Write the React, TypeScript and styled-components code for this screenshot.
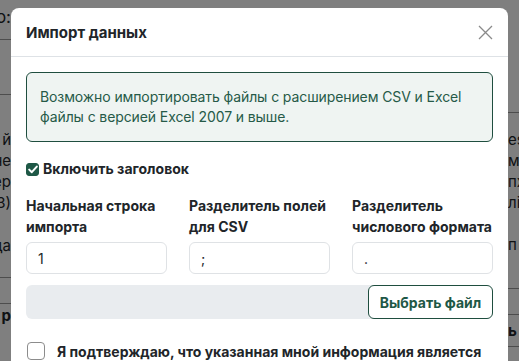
import React from "react";
import styled, { createGlobalStyle } from "styled-components";

const GREEN = "#1e5846";

const Global = createGlobalStyle`
  html, body { margin: 0; padding: 0; height: 100%; overflow: hidden; background: #fff; }
  body { font-family: Inter, "Noto Sans", sans-serif; color: #212529; }
  * { box-sizing: border-box; }
`;

const Page = styled.div`
  display: flex;
  justify-content: space-between;
  height: 361px;
  color: #212529;
  font-size: 15px;
`;

const Strip = styled.div<{ $align: "left" | "right" }>`
  width: 11px;
  display: flex;
  flex-direction: column;
  overflow: hidden;
  --justify: ${(p) => (p.$align === "right" ? "flex-end" : "flex-start")};
`;

const Cell = styled.div<{ $h: number; $line?: boolean; $bold?: boolean; $size?: number }>`
  height: ${(p) => p.$h}px;
  flex-shrink: 0;
  display: flex;
  align-items: center;
  justify-content: var(--justify);
  white-space: nowrap;
  font-size: ${(p) => p.$size ?? 15}px;
  font-weight: ${(p) => (p.$bold ? 700 : 400)};
  border-bottom: ${(p) => (p.$line ? "1px solid #9a9a9a" : "none")};
`;

const Overlay = styled.div`
  position: fixed;
  inset: 0;
  background: rgba(0, 0, 0, 0.5);
  display: flex;
  justify-content: center;
  align-items: flex-start;
  padding-top: 8px;
`;

const Dialog = styled.div`
  width: 497px;
  background: #fff;
  border-radius: 8px;
  flex-shrink: 0;
`;

const Header = styled.div`
  height: 49px;
  display: flex;
  align-items: center;
  justify-content: space-between;
  padding: 1px 13px 0 15px;
  border-bottom: 1px solid #dee2e6;
`;

const Title = styled.h5`
  margin: 0;
  font-size: 15px;
  font-weight: 700;
  color: #212529;
`;

const Close = styled.button`
  width: 20px;
  height: 20px;
  border: 0;
  padding: 0;
  background: transparent;
  display: flex;
  align-items: center;
  justify-content: center;
  color: #8a8a8a;
`;

const Body = styled.div`
  padding: 15px;
  display: flex;
  flex-direction: column;
`;

const Alert = styled.div`
  border: 1px solid #1f4e3f;
  background: #eff4f2;
  color: #265a48;
  border-radius: 6px;
  padding: 14px 13px;
  font-size: 14px;
  letter-spacing: -0.1px;
  line-height: 20px;
`;

const CheckRow = styled.label<{ $size: number; $gap: number }>`
  display: flex;
  align-items: ${(p) => (p.$size > 14 ? "flex-start" : "center")};
  gap: ${(p) => p.$gap}px;
  font-size: 14px;
  font-weight: 700;
  line-height: 22px;
  color: #212529;
`;

const Box = styled.span<{ $checked?: boolean; $size: number }>`
  width: ${(p) => p.$size}px;
  height: ${(p) => p.$size}px;
  flex-shrink: 0;
  border-radius: ${(p) => (p.$size > 14 ? 4 : 3)}px;
  border: 1px solid ${(p) => (p.$checked ? GREEN : "#8c8c8c")};
  background: ${(p) => (p.$checked ? GREEN : "#fff")};
  display: flex;
  align-items: center;
  justify-content: center;
  margin-top: ${(p) => (p.$size > 14 ? 1 : 0)}px;
`;

const CheckWrap = styled.div`
  margin-top: 16px;
`;

const Fields = styled.div`
  display: grid;
  grid-template-columns: repeat(3, 1fr);
  column-gap: 22px;
  margin-top: 15px;
`;

const Field = styled.div`
  display: flex;
  flex-direction: column;
  justify-content: space-between;
`;

const Label = styled.div`
  font-size: 14px;
  font-weight: 700;
  line-height: 21px;
  margin-bottom: 5px;
  color: #212529;
`;

const Input = styled.div`
  height: 32px;
  border: 1px solid #dfe2e5;
  border-radius: 6px;
  padding: 0 11px;
  display: flex;
  align-items: center;
  font-size: 14px;
  color: #212529;
`;

const FileRow = styled.div`
  margin-top: 11px;
  height: 34px;
  display: flex;
  background: #e9ecef;
  border-radius: 6px;
`;

const FileButton = styled.button`
  margin-left: auto;
  height: 34px;
  width: 125px;
  border: 1px solid #1f4e3f;
  border-radius: 6px;
  background: #fff;
  color: ${GREEN};
  font-family: inherit;
  font-size: 14px;
  font-weight: 700;
  padding: 0;
`;

const Confirm = styled.div`
  margin-top: 22px;
  padding-left: 1px;
`;

const Check = () => (
  <svg width="10" height="9" viewBox="0 0 10 9">
    <path d="M1.2 4.6 L3.8 7.2 L8.8 1.6" fill="none" stroke="#fff" strokeWidth="2" strokeLinecap="round" strokeLinejoin="round" />
  </svg>
);

export default function App() {
  return (
    <>
      <Global />
      <Page>
        <Strip $align="right">
          <Cell $h={34} $size={17}>о:</Cell>
          <Cell $h={6} $line />
          <Cell $h={55} $line />
          <Cell $h={34} />
          <Cell $h={21}>й</Cell>
          <Cell $h={21}>не</Cell>
          <Cell $h={21}>ер</Cell>
          <Cell $h={21}>3)</Cell>
          <Cell $h={22} />
          <Cell $h={21}>да</Cell>
          <Cell $h={22} $line />
          <Cell $h={26} $line />
          <Cell $h={22} $bold>р</Cell>
        </Strip>
        <Strip $align="left">
          <Cell $h={113} $line />
          <Cell $h={16} />
          <Cell $h={21}>es</Cell>
          <Cell $h={21}>м</Cell>
          <Cell $h={21}>пх</Cell>
          <Cell $h={21}>лі</Cell>
          <Cell $h={21} />
          <Cell $h={21}>п</Cell>
          <Cell $h={34} $line />
          <Cell $h={26} $line />
          <Cell $h={32} $line $bold>ь</Cell>
        </Strip>
      </Page>
      <Overlay>
        <Dialog>
          <Header>
            <Title>Импорт данных</Title>
            <Close aria-label="Закрыть">
              <svg width="15" height="15" viewBox="0 0 15 15">
                <path d="M1 1 L14 14 M14 1 L1 14" stroke="currentColor" strokeWidth="1.3" />
              </svg>
            </Close>
          </Header>
          <Body>
            <Alert>
              Возможно импортировать файлы с расширением CSV и Excel файлы с версией Excel 2007 и выше.
            </Alert>
            <CheckWrap>
              <CheckRow $size={13} $gap={4}>
                <Box $checked $size={13}>
                  <Check />
                </Box>
                Включить заголовок
              </CheckRow>
            </CheckWrap>
            <Fields>
              <Field>
                <Label>Начальная строка импорта</Label>
                <Input>1</Input>
              </Field>
              <Field>
                <Label>Разделитель полей для CSV</Label>
                <Input>;</Input>
              </Field>
              <Field>
                <Label>Разделитель числового формата</Label>
                <Input>.</Input>
              </Field>
            </Fields>
            <FileRow>
              <FileButton>Выбрать файл</FileButton>
            </FileRow>
            <Confirm>
              <CheckRow $size={18} $gap={12}>
                <Box $size={18} />
                Я подтверждаю, что указанная мной информация является достоверной и полной.
              </CheckRow>
            </Confirm>
          </Body>
        </Dialog>
      </Overlay>
    </>
  );
}
